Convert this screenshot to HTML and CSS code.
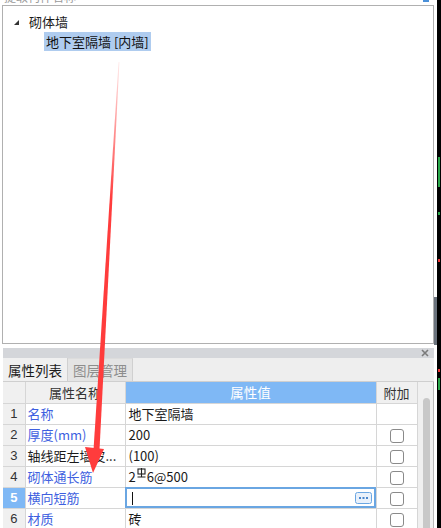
FILE: index.html
```html
<!DOCTYPE html>
<html lang="zh-CN">
<head>
  <meta charset="UTF-8" />
  <title>属性列表</title>
  <link rel="stylesheet" href="styles.css">
</head>
<body>
<div class="screen">
  <div class="work">
    <!-- 构件树 -->
    <div class="search-cut"><span>提取构件名称</span><i class="search-btn"></i></div>
    <div class="tree-panel">
      <ul class="tree">
        <li class="node">
          <span class="twisty"></span><span class="label">砌体墙</span>
        </li>
        <li class="leaf"><span class="label selected">地下室隔墙 [内墙]</span></li>
      </ul>
    </div>

    <!-- 属性面板 -->
    <div class="prop-panel">
      <div class="dock-bar">
        <svg class="close" viewBox="0 0 8 8"><path d="M1 1L7 7M7 1L1 7" stroke="#7a7a7a" stroke-width="1.6"/></svg>
      </div>
      <div class="tabs">
        <span class="tab active">属性列表</span>
        <span class="tab">图层管理</span>
      </div>
      <div class="grid-wrap">
        <table class="grid">
          <colgroup>
            <col class="c-no"><col class="c-name"><col class="c-val"><col class="c-add">
          </colgroup>
          <thead>
            <tr>
              <th></th>
              <th>属性名称</th>
              <th class="hl">属性值</th>
              <th>附加</th>
            </tr>
          </thead>
          <tbody>
            <tr>
              <td class="no">1</td><td class="name">名称</td><td>地下室隔墙</td><td></td>
            </tr>
            <tr>
              <td class="no">2</td><td class="name">厚度(mm)</td><td>200</td><td><span class="chk"></span></td>
            </tr>
            <tr>
              <td class="no">3</td><td class="name plain">轴线距左墙皮...</td><td>(100)</td><td><span class="chk"></span></td>
            </tr>
            <tr>
              <td class="no">4</td><td class="name">砌体通长筋</td>
              <td>2<svg class="grade" viewBox="0 0 9 10"><rect x="1" y="1" width="7" height="5" fill="none" stroke="#222" stroke-width="1.1"/><path d="M4.5 0v9M0.5 9h8" stroke="#222" stroke-width="1.1"/></svg>6@500</td>
              <td><span class="chk"></span></td>
            </tr>
            <tr class="current">
              <td class="no">5</td><td class="name">横向短筋</td>
              <td class="editing"><span class="caret"></span>
                <svg class="more" viewBox="0 0 17 12"><rect x="0.5" y="0.5" width="16" height="11" rx="2" fill="#e9f1fb" stroke="#6aa6e2"/><rect x="4" y="5" width="2" height="2" fill="#4a86cc"/><rect x="7.5" y="5" width="2" height="2" fill="#4a86cc"/><rect x="11" y="5" width="2" height="2" fill="#4a86cc"/></svg>
              </td>
              <td><span class="chk"></span></td>
            </tr>
            <tr>
              <td class="no">6</td><td class="name">材质</td><td>砖</td><td><span class="chk"></span></td>
            </tr>
          </tbody>
        </table>
        <div class="vscroll"><div class="thumb"></div></div>
      </div>
    </div>
  </div>

  <div class="edge">
    <i class="mark green" style="top:157px;height:30px"></i>
    <i class="mark green" style="top:212px;height:3px"></i>
    <i class="mark red" style="top:259px;height:3px"></i>
    <i class="mark red" style="top:369px;height:3px"></i>
    <i class="mark green" style="top:378px;height:12px"></i>
  </div>
  <div class="side-grip"></div>

  <!-- 标注箭头 -->
  <svg class="arrow" width="441" height="528" viewBox="0 0 441 528">
    <defs>
      <linearGradient id="fade" x1="0" y1="60" x2="0" y2="200" gradientUnits="userSpaceOnUse">
        <stop offset="0" stop-color="#ff3c3c" stop-opacity="0.1"/>
        <stop offset="1" stop-color="#ff3c3c" stop-opacity="1"/>
      </linearGradient>
    </defs>
    <polygon points="118.6,62 119.4,62 99.5,450 93.5,450" fill="url(#fade)"/>
    <polygon points="85,447 104,449 93,473" fill="#ff3c3c"/>
  </svg>
</div>
</body>
</html>
```

FILE: styles.css
```css
* {
  box-sizing: border-box;
}
body {
  margin: 0;
  background: #ffffff;
  font-family: "Noto Sans CJK SC", "Noto Sans", sans-serif;
  font-size: 13px;
  color: #1a1a1a;
}
.screen {
  position: relative;
  width: 441px;
  height: 528px;
  overflow: hidden;
  display: flex;
}
.work {
  width: 437px;
  display: flex;
  flex-direction: column;
}

/* 顶部被截断的搜索框 */
.search-cut {
  flex-shrink: 0;
  height: 5px;
  overflow: hidden;
  position: relative;
  margin-left: 4px;
}
.search-cut span {
  display: block;
  margin-top: -10px;
  color: #9a9a9a;
  font-size: 12px;
  line-height: 14px;
}
.search-btn {
  position: absolute;
  right: 8px;
  top: 0;
  width: 6px;
  height: 2px;
  background: #4a90d9;
}

.tree-panel {
  flex-shrink: 0;
  margin-left: 2px;
  width: 432px;
  height: 339px;
  border: 1px solid #b0b0b0;
  background: #fff;
}
.tree {
  list-style: none;
  margin: 0;
  padding: 6px 0 0 0;
}
.tree li {
  display: flex;
  align-items: center;
  height: 19px;
}
.tree .node {
  padding-left: 11px;
}
.twisty {
  width: 0;
  height: 0;
  border-left: 5px solid transparent;
  border-bottom: 5px solid #333;
  margin-right: 8px;
  margin-top: 2px;
}
.tree .leaf {
  padding-left: 41px;
  margin-top: 1px;
}
.label {
  line-height: 19px;
  padding: 0 2px;
}
.selected {
  background: #afccef;
  color: #111;
}

/* 属性面板 */
.prop-panel {
  margin-top: 4px;
  margin-left: 3px;
  width: 431px;
  flex: 1;
  min-height: 0;
  overflow: hidden;
  display: flex;
  flex-direction: column;
  background: #efefef;
}
.dock-bar {
  flex-shrink: 0;
  height: 10px;
  background: #d4d6da;
  display: flex;
  justify-content: flex-end;
  align-items: center;
  padding-right: 5px;
}
.close {
  width: 8px;
  height: 8px;
}
.tabs {
  flex-shrink: 0;
  height: 24px;
  display: flex;
  align-items: stretch;
  border-bottom: 1px solid #cfcfcf;
  background: #eeeeee;
}
.tab {
  width: 65px;
  display: flex;
  align-items: center;
  justify-content: center;
  font-size: 13.5px;
  color: #8d8d8d;
  background: #e4e4e4;
  border-right: 1px solid #d0d0d0;
  border-top: 1px solid #dcdcdc;
}
.tab.active {
  color: #1a1a1a;
  background: #f0f0f0;
  border-top: none;
}

.grid-wrap {
  flex: 1;
  min-height: 0;
  display: flex;
  background: #fff;
  border-right: 1px solid #b8b8b8;
}
.grid {
  width: 414px;
  border-collapse: collapse;
  table-layout: fixed;
  align-self: flex-start;
}
.c-no { width: 22px; }
.c-name { width: 100px; }
.c-val { width: 251px; }
.c-add { width: 41px; }
.grid th,
.grid td {
  height: 21px;
  padding: 0;
  border: 1px solid #d6d6d6;
  line-height: 19px;
  white-space: nowrap;
  overflow: hidden;
}
.grid th {
  background: #f0f0f0;
  font-weight: normal;
  color: #333;
  text-align: center;
  border-top: none;
}
.grid th:first-child,
.grid td:first-child {
  border-left: none;
}
.grid th.hl {
  background: #7fb8f5;
  color: #fff;
  font-size: 13.5px;
}
.grid td {
  padding-left: 3px;
}
.grid td.no {
  padding: 0;
  background: #f0f0f0;
  text-align: center;
  color: #333;
  font-family: "Liberation Sans", sans-serif;
  font-size: 13px;
}
.grid td.name {
  color: #3e5fe0;
  padding-left: 2px;
}
.grid td.name.plain {
  color: #1a1a1a;
}
.grid td:last-child {
  text-align: center;
}
.grade {
  width: 9px;
  height: 10px;
  vertical-align: 4px;
  margin: 0 1px;
}
.current td.no {
  background: #7fb8f5;
  color: #fff;
  font-weight: bold;
}
.grid td.editing {
  position: relative;
  outline: 2px solid #6aa6e2;
  outline-offset: -2px;
}
.caret {
  display: inline-block;
  width: 1px;
  height: 13px;
  background: #111;
  margin-left: 3px;
  vertical-align: -2px;
}
.more {
  position: absolute;
  right: 4px;
  top: 4px;
  width: 17px;
  height: 12px;
}
.chk {
  display: inline-block;
  width: 14px;
  height: 14px;
  border: 1.5px solid #8a8a8a;
  border-radius: 3px;
  vertical-align: -3px;
  margin-left: -3px;
}
.vscroll {
  flex: 1;
  background: #f0f0f0;
  padding: 16px 3px 0 5px;
}
.thumb {
  height: 140px;
  background: #c8c8c8;
  border-radius: 5px 5px 0 0;
}

/* 右侧绘图区边缘 */
.edge {
  position: relative;
  width: 4px;
  background: #000;
}
.mark {
  position: absolute;
  left: 1px;
  width: 2px;
}
.green { background: #2aa84a; }
.red { background: #e33; }
.side-grip {
  position: absolute;
  left: 434px;
  top: 297px;
  width: 3px;
  height: 48px;
  background: #6b737d;
}

.arrow {
  position: absolute;
  left: 0;
  top: 0;
  pointer-events: none;
}
```
